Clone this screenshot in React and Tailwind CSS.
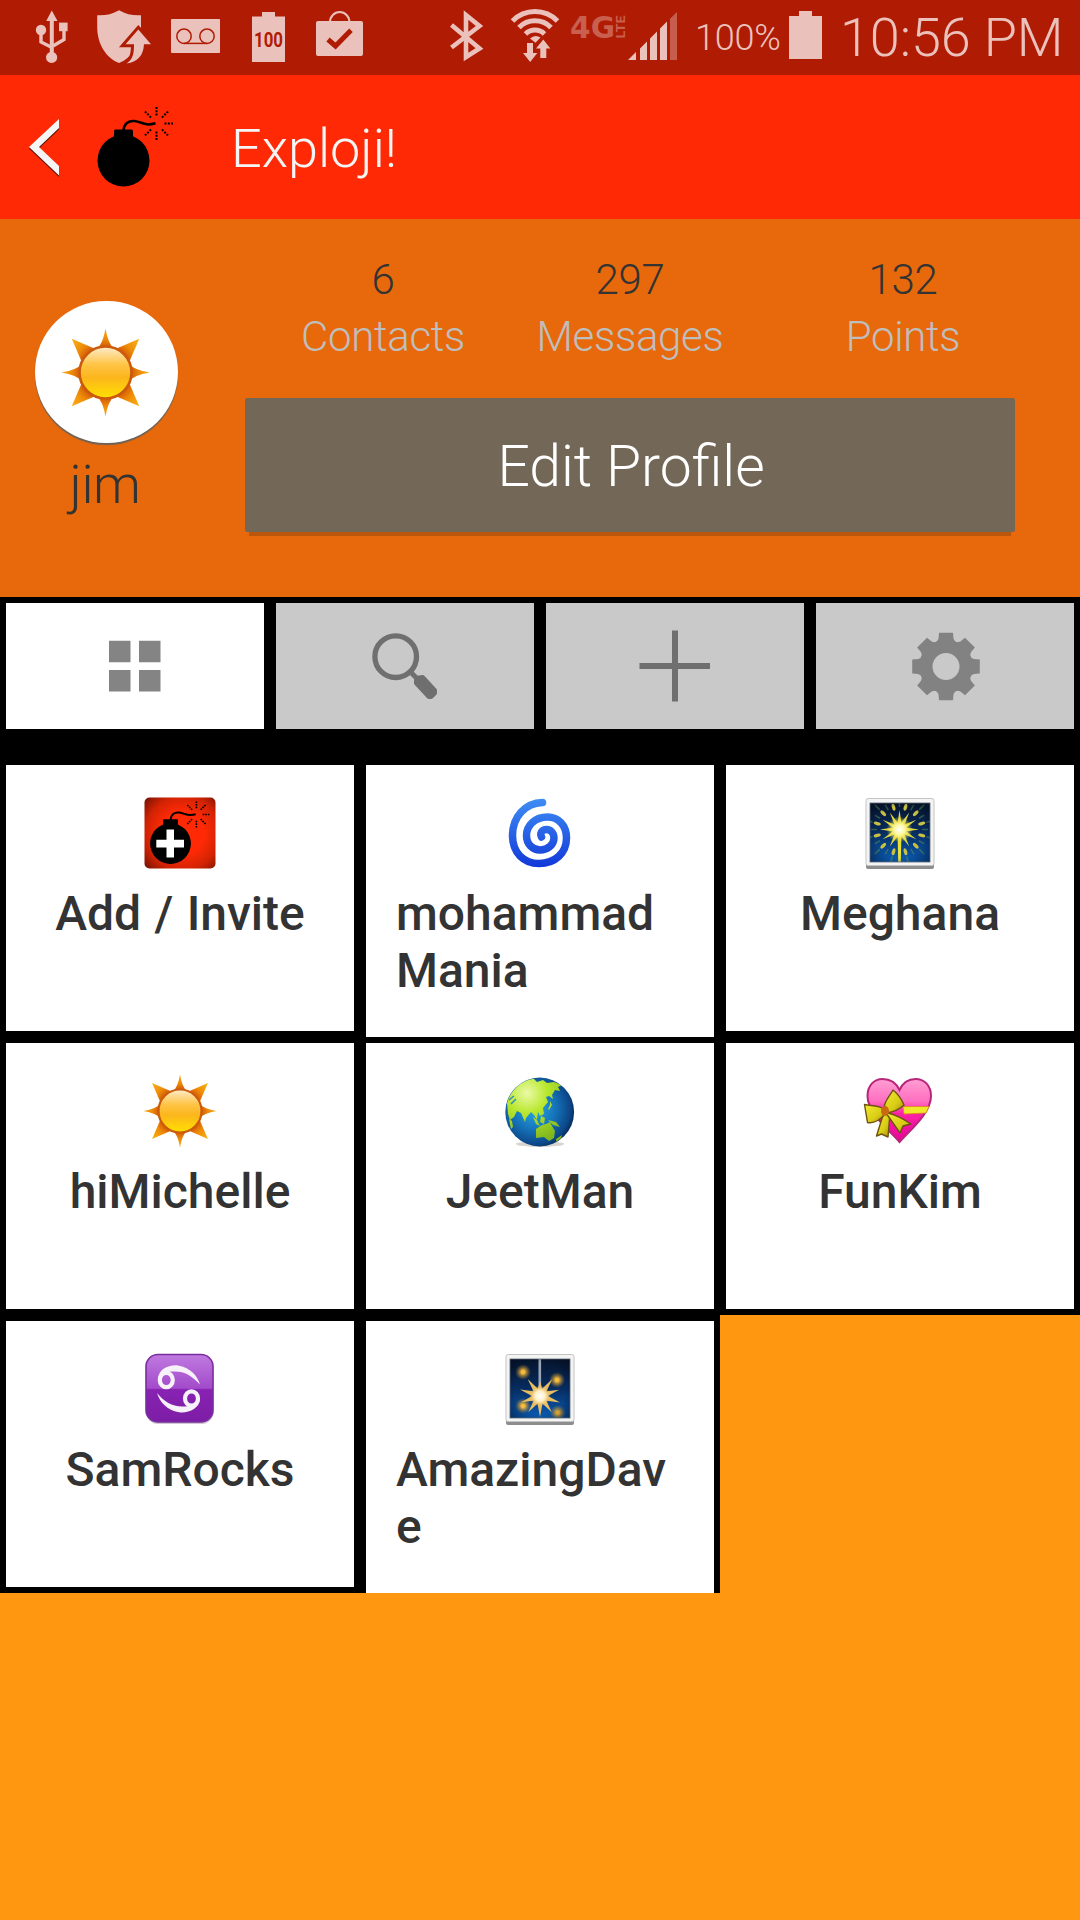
const STATUS = '#eac2bb'
const BAR = '#b01b04'

function StatusIcon({ box, width, className = '', children }) {
  return (
    <svg viewBox={box} width={width} height="75" fill={STATUS} className={`block shrink-0 overflow-visible ${className}`}>
      {children}
    </svg>
  )
}

function UsbIcon() {
  return (
    <StatusIcon box="35 0 34 75" width="34" className="ml-[35px]">
      <path d="M51.8 10.5 57.5 21H46.2z" />
      <rect x="49.8" y="20" width="4" height="34" />
      <circle cx="41" cy="30" r="5.2" />
      <rect x="59" y="22.6" width="8.6" height="8.6" />
      <circle cx="51.6" cy="57.4" r="5.6" />
      <path d="M41 33v9l10 5M64 31v8.500l-11 6.500" fill="none" stroke={STATUS} strokeWidth="3.400" />
    </StatusIcon>
  )
}

function ShieldIcon() {
  return (
    <StatusIcon box="96 0 56 75" width="56" className="ml-[27px]">
      <path d="M119 10.300C112 14.500 105 15.700 97.200 15.300V27c0 18 9.800 31.500 21.800 36 12-4.500 22-18 22-36V15.300C133 15.700 126 14.500 119 10.300z" />
      <path d="M138.300 29.500 151 44.300h-7c-.5 11-6.500 18.200-17.500 19.200 6-4 7.500-8.500 7.500-19.200h-8.500z" fill={BAR} stroke={BAR} strokeWidth="6" />
      <path d="M138.300 29.500 151 44.300h-7c-.5 11-6.500 18.200-17.500 19.200 6-4 7.500-8.500 7.500-19.200h-8.500z" />
    </StatusIcon>
  )
}

function VoicemailIcon() {
  return (
    <StatusIcon box="171 0 49 75" width="49" className="ml-[19px]">
      <rect x="171" y="19" width="49" height="34" rx="1" />
      <g fill="none" stroke={BAR} strokeWidth="1.500">
        <circle cx="184" cy="36.200" r="7.200" />
        <circle cx="207" cy="36.200" r="7.200" />
        <path d="M184 43.400h23" />
      </g>
    </StatusIcon>
  )
}

function BatteryFullIcon() {
  return (
    <StatusIcon box="252 0 33 75" width="33" className="ml-[32px]">
      <path d="M262 12h13v4.500h10V62h-33V16.500h10z" />
      <text x="254" y="46.500" textLength="29" lengthAdjust="spacingAndGlyphs" fontFamily="Roboto, sans-serif" fontWeight="700" fontSize="20.500" fill={BAR}>
        100
      </text>
    </StatusIcon>
  )
}

function BagIcon() {
  return (
    <StatusIcon box="316 0 47 75" width="47" className="ml-[31px]">
      <rect x="316" y="21" width="47" height="35" rx="2" />
      <path d="M330 22a9.700 10 0 0 1 19.400 0" fill="none" stroke={STATUS} strokeWidth="2" />
      <path d="m328 39.500 7.500 6.500L351 30.300" fill="none" stroke={BAR} strokeWidth="5" />
    </StatusIcon>
  )
}

function BluetoothIcon() {
  return (
    <StatusIcon box="449 0 35 75" width="35" className="ml-[86px]">
      <path d="m451.500 25 28 23.500-13.500 8.500V15l13.500 11-28 21.500" fill="none" stroke={STATUS} strokeWidth="4.600" />
    </StatusIcon>
  )
}

function WifiIcon() {
  return (
    <StatusIcon box="509 0 52 75" width="52" className="ml-[25px]">
      <g fill="none" stroke={STATUS} strokeWidth="5">
        <path d="M512.500 21a31.500 31.500 0 0 1 45 0" />
        <path d="M519 27.500a22.500 22.500 0 0 1 32 0" />
        <path d="M525.500 34a13.500 13.500 0 0 1 19 0" />
      </g>
      <path d="M530 38.500q5-4.500 10.500-1l-5 5.300z" />
      <path d="M527 43h6v10h4.300L530.200 62 523 53h4z" />
      <path d="M540.300 58h6V48.500h4L543.300 39.500 536 48.500h4.300z" />
    </StatusIcon>
  )
}

function LteIcon() {
  return (
    <StatusIcon box="570 0 56 75" width="56" className="ml-[9px]">
      <g fill="#c95f4f">
        <text x="570" y="38" textLength="45" lengthAdjust="spacingAndGlyphs" fontFamily="DejaVu Sans, sans-serif" fontWeight="700" fontSize="29.500">
          4G
        </text>
        <text transform="translate(625 38.500) rotate(-90)" textLength="23" lengthAdjust="spacingAndGlyphs" fontFamily="Roboto, sans-serif" fontWeight="700" fontSize="12.500">
          LTE
        </text>
      </g>
    </StatusIcon>
  )
}

function SignalIcon() {
  return (
    <StatusIcon box="628 0 50 75" width="50" className="ml-[2px]">
      <path d="M628 60h8v-8zM640 60h7V41.500l-7 7zM650 60h7V31.500l-7 7zM660 60h7V21.500l-7 7z" />
      <path d="M670 60h7V12l-7 6.700z" opacity=".4" />
    </StatusIcon>
  )
}

function StatusBar() {
  return (
    <div className="flex h-[75px] items-center bg-[#b01b04] text-[#eac2bb]">
      <UsbIcon />
      <ShieldIcon />
      <VoicemailIcon />
      <BatteryFullIcon />
      <BagIcon />
      <BluetoothIcon />
      <WifiIcon />
      <LteIcon />
      <SignalIcon />
      <span className="ml-[17px] w-[94px] pt-[2px] text-[36px] leading-[75px] font-[360] tracking-[-0.2px] whitespace-nowrap">100%</span>
      <StatusIcon box="789 0 33 75" width="33">
        <path d="M799 11h13v5h10v43h-33V16h10z" />
      </StatusIcon>
      <span className="ml-[18px] text-[54px] leading-[70px] font-[330] tracking-[-0.1px] whitespace-nowrap">10:56 PM</span>
    </div>
  )
}

// Origin is the centre of the bomb's body
function Bomb({ transform }) {
  return (
    <g transform={transform}>
      <circle r="26" />
      <rect x="-9.500" y="-31" width="19" height="12" rx="1.500" />
      <path d="M0-30C.5-37 5-40 11-39.500 19-38.500 21-34 32-37.300" fill="none" stroke="#000" strokeWidth="2.500" />
      <g fill="none" stroke="#000" strokeWidth="2" strokeDasharray="2 1.300">
        <path d="M33-45v-9.500M33-29v9.500M41-37h8.500M38.500-43l7-7M38.500-31l7 7M27.500-31l-7 7M27.500-43l-7-7" />
      </g>
    </g>
  )
}

const SUN_RAYS = [0, 45, 90, 135, 180, 225, 270, 315]

function Sun({ size = 72 }) {
  return (
    <svg viewBox="0 0 72 72" width={size} height={size} className="block overflow-visible">
      <defs>
        <linearGradient id="sunCore" x1="0" y1="0" x2="0" y2="1">
          <stop offset="0" stopColor="#fdeccb" />
          <stop offset=".35" stopColor="#ffc445" />
          <stop offset=".6" stopColor="#fcb61c" />
          <stop offset="1" stopColor="#ffe100" />
        </linearGradient>
        <radialGradient id="sunRay" gradientUnits="userSpaceOnUse" cx="36" cy="36" r="40">
          <stop offset=".5" stopColor="#cf5205" />
          <stop offset=".7" stopColor="#ee8c08" />
          <stop offset="1" stopColor="#fdb515" />
        </radialGradient>
      </defs>
      {SUN_RAYS.map((angle) => (
        <path
          key={angle}
          d={angle % 90 ? 'M36-3.500 44.500 18h-17z' : 'M36-.5Q38 12 43.500 17h-15Q34 12 36-.5z'}
          fill="url(#sunRay)"
          transform={`rotate(${angle} 36 36)`}
        />
      ))}
      <circle cx="36" cy="36" r="21.500" fill="url(#sunCore)" stroke="#cc5a0c" strokeWidth="2.200" />
    </svg>
  )
}

function AddInvite() {
  return (
    <svg viewBox="0 0 72 72" width="72" height="72" className="block">
      <defs>
        <radialGradient id="addBg" cx=".54" cy=".5" r=".74">
          <stop offset=".4" stopColor="#ff2a05" />
          <stop offset=".7" stopColor="#d32304" />
          <stop offset="1" stopColor="#6d1102" />
        </radialGradient>
      </defs>
      <rect x=".5" y=".5" width="71" height="71" rx="5" fill="url(#addBg)" />
      <Bomb transform="translate(26.500 46.500) scale(.785)" />
      <path d="M22.500 32.500H30v10.200h10v7.800H30v10h-7.500v-10H12.300v-7.800h10.200z" fill="#fff" />
    </svg>
  )
}

function Cyclone() {
  return (
    <svg viewBox="0 0 72 72" width="72" height="72" className="block">
      <defs>
        <linearGradient id="cyclone" gradientUnits="userSpaceOnUse" x1="0" y1="2" x2="0" y2="70">
          <stop offset="0" stopColor="#3f8df5" />
          <stop offset="1" stopColor="#1238d8" />
        </linearGradient>
      </defs>
      <path
        d="M38.500 5.500C21 6 8.500 20 8.500 38.500 8.500 56 20 66.500 35 66.500 51 66.500 62.500 56 62.500 41 62.500 28 54 20 43.500 20 31 20 22.500 28.500 22.500 38.500 22.500 47 28.500 53 36 53 44 53 50 47.500 50 41 50 35.500 46 32.500 42.500 32.500 38 32.500 35.500 36 37.500 40"
        fill="none"
        stroke="url(#cyclone)"
        strokeWidth="7.500"
        strokeLinecap="round"
      />
    </svg>
  )
}

function Frame({ id, children }) {
  return (
    <svg viewBox="0 0 72 72" width="72" height="72" className="block">
      <defs>
        <linearGradient id={id} x1="0" y1="0" x2="0" y2="1">
          <stop offset="0" stopColor="#06142c" />
          <stop offset=".5" stopColor="#062c60" />
          <stop offset="1" stopColor="#0a5db6" />
        </linearGradient>
        <radialGradient id={`${id}Edge`} r=".72">
          <stop offset=".6" stopColor="#020a1c" stopOpacity="0" />
          <stop offset="1" stopColor="#020a1c" stopOpacity=".6" />
        </radialGradient>
        <clipPath id={`${id}Clip`}>
          <rect x="6" y="6" width="60" height="59" />
        </clipPath>
      </defs>
      <rect x="2" y="4" width="68" height="68" rx="2" fill="#8d8d8d" />
      <rect x="2" y="1.500" width="68" height="67" rx="2" fill="#f4f4f4" stroke="#c4c4c4" />
      <rect x="6" y="6" width="60" height="59" fill={`url(#${id})`} />
      <g clipPath={`url(#${id}Clip)`}>{children}</g>
      <rect x="6" y="6" width="60" height="59" fill={`url(#${id}Edge)`} stroke="#5d6670" strokeWidth=".8" />
    </svg>
  )
}

const TWELFTHS = [0, 30, 60, 90, 120, 150, 180, 210, 240, 270, 300, 330]

function Fireworks() {
  return (
    <Frame id="fireworks">
      <radialGradient id="burst">
        <stop offset="0" stopColor="#fff" />
        <stop offset=".4" stopColor="#fdf8a0" />
        <stop offset="1" stopColor="#f3e33a" stopOpacity="0" />
      </radialGradient>
      {TWELFTHS.map((angle) => (
        <g key={angle} transform={`rotate(${angle} 35.500 32.500)`}>
          <path d="M35.500 13 38.200 31h-5.400z" fill="#dfd63e" />
          <ellipse cx="35.500" cy="9.500" rx="1.700" ry="3.600" fill="#c9c143" transform="rotate(15 35.500 32.500)" />
          <ellipse cx="35.500" cy="1" rx="1" ry="4" fill="#5f8f52" opacity=".55" transform="rotate(15 35.500 32.500)" />
          <path d="M35.500 4v6" stroke="#5f8f52" strokeWidth="1.500" opacity=".5" />
        </g>
      ))}
      <path d="M33.500 34h4l-.7 31h-2.600z" fill="#e9df35" />
      <circle cx="35.500" cy="32.500" r="13" fill="url(#burst)" />
    </Frame>
  )
}

function Globe() {
  return (
    <svg viewBox="0 0 72 72" width="72" height="72" className="block">
      <defs>
        <radialGradient id="ocean" cx=".42" cy=".45" r=".62">
          <stop offset="0" stopColor="#28a8e4" />
          <stop offset=".5" stopColor="#1673b9" />
          <stop offset=".85" stopColor="#0b4687" />
          <stop offset="1" stopColor="#042247" />
        </radialGradient>
        <radialGradient id="land" gradientUnits="userSpaceOnUse" cx="23" cy="18" r="50">
          <stop offset="0" stopColor="#eafaa8" />
          <stop offset=".4" stopColor="#b9e82f" />
          <stop offset="1" stopColor="#7fb51d" />
        </radialGradient>
        <clipPath id="globeClip">
          <circle cx="35.700" cy="37" r="34" />
        </clipPath>
      </defs>
      <ellipse cx="36" cy="69" rx="24" ry="3" fill="#d8d4cf" />
      <circle cx="35.700" cy="37" r="34.400" fill="url(#ocean)" />
      <g clipPath="url(#globeClip)" fill="url(#land)">
        <path d="M3 28C5 14 17 4 29 3l4 4 6-2 4 3 7-1 8 3-4 2 2 4-5-1-3 5 1 4-4-3-3 1 2 5-5 6 1 6-4 2-2-4-1 8-3-5-3-3-5 6-1 4-4-9-4-2-3 6-4 3-2-6z" />
        <path d="M5 44l3 2 1 6-2 2zM29 42l4 3 3 6-4-2zM37 41l4 2-1 6-4-2zM44 45l8 2 4 5-7-2zM46 26l2 4-3 5-1-1 2-4z" />
        <path d="M32 54l6-4 4-1 4-2 2 4 3 5-1 7-5 3-5-4-8 1zM52 64l6-4-1 4-5 3z" />
        <path d="M5 25l5-4M7 29l5-5" stroke="#2c8dbd" strokeWidth="1.500" />
      </g>
    </svg>
  )
}

function GiftHeart() {
  return (
    <svg viewBox="0 0 72 72" width="72" height="72" className="block overflow-visible">
      <defs>
        <linearGradient id="heart" x1="0" y1="0" x2="0" y2="1">
          <stop offset="0" stopColor="#ff9ed2" />
          <stop offset=".35" stopColor="#ff6fc0" />
          <stop offset=".55" stopColor="#fb23a6" />
          <stop offset="1" stopColor="#e8009a" />
        </linearGradient>
        <linearGradient id="bow" x1="0" y1="0" x2="1" y2="1">
          <stop offset="0" stopColor="#f2ee2f" />
          <stop offset=".6" stopColor="#d9cc16" />
          <stop offset="1" stopColor="#a98c06" />
        </linearGradient>
      </defs>
      <path d="M35.500 67C25 55 3.500 38 3.500 21 3.500 10 10.500 4 18.500 4c8 0 14 4.500 17 11C38.500 8.500 44 4 51.500 4 60 4 67 10 67 21c0 17-21 34-31.500 46z" fill="url(#heart)" stroke="#b8267c" strokeWidth="2" />
      <path d="M39 31.500h26l-3 6.500-22 1z" fill="#f0e92a" stroke="#d9861c" strokeWidth=".8" />
      <g fill="url(#bow)" stroke="#6e5210" strokeWidth="1.400" strokeLinejoin="round">
        <path d="M20 37 12.500 61l5-2 6.500 3 2-24z" />
        <path d="m22 38 14 20 3-7 8-2C41 45 33 40 24 38z" />
        <path d="M20 34C15 30 7 31 .5 29.500l3 18c7 1.500 14-4 18-9z" />
        <path d="M20 34c0-8 6-13 9-19 5 4 9 10 11 15-5 5-11 7-18 8z" />
      </g>
      <ellipse cx="21" cy="36" rx="4" ry="5" fill="#c96a12" />
    </svg>
  )
}

function Cancer() {
  return (
    <svg viewBox="0 0 72 72" width="72" height="72" className="block">
      <defs>
        <linearGradient id="cancerBg" x1="0" y1="0" x2="0" y2="1">
          <stop offset="0" stopColor="#c07ae0" />
          <stop offset=".5" stopColor="#a34bca" />
          <stop offset=".52" stopColor="#8822b2" />
          <stop offset="1" stopColor="#7d1da6" />
        </linearGradient>
      </defs>
      <rect x="2" y="2.500" width="67.500" height="68.500" rx="12" fill="#cfc8d3" />
      <rect x="2" y="1.500" width="67" height="67.500" rx="12" fill="url(#cancerBg)" stroke="#7a2d9e" strokeWidth="1.600" />
      <g fill="none" stroke="#f7f1fa" strokeWidth="4.200" strokeLinecap="round">
        <ellipse cx="22.300" cy="27" rx="6.500" ry="7.200" />
        <ellipse cx="47.500" cy="45.500" rx="6.500" ry="7.200" />
      </g>
      <g fill="#f7f1fa">
        <path d="M13.800 27C14 16 25 11.500 34 12.500 46 14.500 53 22 56 31.500 48 23 41 18.500 31 18.500 24 18.500 18 20 13.800 27z" />
        <path d="M56 45.500C55.500 56 44 60.500 35 59.300 23 57 16 49.500 13 40 20 48.500 28 53.500 38 53.500 45 53.500 51 52 56 45.500z" />
      </g>
    </svg>
  )
}

const EMBERS = [[19, 19], [53, 27], [19, 53], [54, 60]]
const STAR_RAYS = [[0, 15], [36, 21], [72, 20], [108, 21], [144, 20], [180, 21], [216, 20], [252, 20], [288, 21], [324, 21]]

function Sparkler() {
  return (
    <Frame id="sparkler">
      <radialGradient id="spark">
        <stop offset="0" stopColor="#fff" />
        <stop offset=".5" stopColor="#fdeec4" />
        <stop offset="1" stopColor="#efc05d" stopOpacity="0" />
      </radialGradient>
      <radialGradient id="ember">
        <stop offset=".2" stopColor="#f6bb3c" />
        <stop offset="1" stopColor="#a87b2a" stopOpacity="0" />
      </radialGradient>
      <rect x="34.500" y="5" width="2.600" height="32" fill="#9aa6b8" />
      {EMBERS.map(([x, y]) => (
        <circle key={`${x}-${y}`} cx={x} cy={y} r="8" fill="url(#ember)" />
      ))}
      {STAR_RAYS.map(([angle, length]) => (
        <path key={angle} d={`M36 ${43 - length}L39.500 41h-7z`} fill="#e9bd62" transform={`rotate(${angle} 36 43)`} />
      ))}
      <circle cx="36" cy="43" r="10.500" fill="url(#spark)" />
    </Frame>
  )
}

function GridIcon() {
  return (
    <svg viewBox="0 0 72 72" width="72" height="72" fill="#848484">
      <path d="M10 10.700h21.500v21.500H10zM40 10.700h21.500v21.500H40zM10 40h21.500v21.500H10zM40 40h21.500v21.500H40z" />
    </svg>
  )
}

function SearchIcon() {
  return (
    <svg viewBox="0 0 72 72" width="72" height="72" fill="none" stroke="#6f6f6f">
      <circle cx="26.700" cy="26.700" r="20.800" strokeWidth="5.300" />
      <path d="m41 41.500 9 9" strokeWidth="5" />
      <path d="M53.500 47.500 65.500 60.500V63L62 66.500H60L47.500 53V48.500z" fill="#6f6f6f" strokeWidth="5" strokeLinejoin="round" />
    </svg>
  )
}

function PlusIcon() {
  return (
    <svg viewBox="0 0 72 72" width="72" height="72" fill="#6f6f6f">
      <path d="M33 .5h6V33h32v6H39v32.500h-6V39H.5v-6H33z" />
    </svg>
  )
}

function GearIcon() {
  return (
    <svg viewBox="0 0 72 72" width="72" height="72" fill="#828282">
      <circle cx="37" cy="36.500" r="20" fill="none" stroke="#828282" strokeWidth="13" />
      {SUN_RAYS.map((angle) => (
        <path key={angle} d="M30 2.700h14l.5 6q1 3 4 4.300h-23q3-1.300 4-4.300z" transform={`rotate(${angle} 37 36.500)`} />
      ))}
    </svg>
  )
}

const stats = [
  { label: 'Contacts', value: '6', className: 'w-[276px]' },
  { label: 'Messages', value: '297', className: 'w-[218px]' },
  { label: 'Points', value: '132', className: 'w-[328px]' },
]

const tabs = [
  { id: 'contacts', Icon: GridIcon },
  { id: 'search', Icon: SearchIcon },
  { id: 'add', Icon: PlusIcon },
  { id: 'settings', Icon: GearIcon },
]

const contacts = [
  { name: 'Add / Invite', Icon: AddInvite },
  { name: 'mohammad Mania', Icon: Cyclone, tall: true },
  { name: 'Meghana', Icon: Fireworks },
  { name: 'hiMichelle', Icon: Sun },
  { name: 'JeetMan', Icon: Globe },
  { name: 'FunKim', Icon: GiftHeart },
  { name: 'SamRocks', Icon: Cancer },
  { name: 'AmazingDave', Icon: Sparkler, tall: true },
]

function Header() {
  return (
    <header className="flex h-[144px] items-center bg-[#ff2a05]">
      <svg viewBox="28 75 32 144" width="32" height="144" className="ml-7 block">
        <path d="M59 120.500 29 148.500 59 177v-9.500L39 148.500 59 129.500z" fill="#5c1206" />
        <path d="M59 119 29 147 59 175.500V166L39 147 59 128z" fill="#f5f5f5" />
      </svg>
      <svg viewBox="96 75 80 144" width="80" height="144" className="ml-9 block">
        <Bomb transform="translate(123.500 160.500)" />
      </svg>
      <h1 className="ml-[55px] pt-[4px] text-[54px] leading-[64px] font-[340] text-[#f5f5f5]">Exploji!</h1>
    </header>
  )
}

function Profile() {
  return (
    <section className="flex h-[378px] bg-[#e8690b]">
      <div className="flex w-[208px] shrink-0 flex-col items-start pt-[82px] pl-[35px]">
        <div className="grid h-[142px] w-[143px] place-items-center rounded-full bg-white pr-[3px] shadow-[0_2px_1px_#6b6257]">
          <Sun size={87} />
        </div>
        <p className="mt-[10px] w-[140px] text-center text-[54px] leading-[64px] font-[350] tracking-[-0.5px] text-[#333]">jim</p>
      </div>
      <div className="pt-9">
        <div className="ml-[37px] flex">
          {stats.map((stat) => (
            <div key={stat.label} className={`shrink-0 text-center text-[42px] leading-[50px] font-[340] tracking-[-0.3px] ${stat.className}`}>
              <p className="text-[#333]">{stat.value}</p>
              <p className="mt-[7px] text-[#bebebe]">{stat.label}</p>
            </div>
          ))}
        </div>
        <button className="mt-[36px] ml-[37px] block h-[134px] w-[770px] rounded-[2px] bg-[#736757] pt-[3px] pl-[2px] text-[57px] leading-[131px] font-[340] text-white shadow-[0_8px_0_-4px_#bb560d]">
          Edit Profile
        </button>
      </div>
    </section>
  )
}

function ContactTile({ name, Icon, tall }) {
  return (
    <div className={`h-[278px] bg-black px-1.5 pt-1.5 ${tall ? '' : 'pb-1.5'}`}>
      <div className="flex h-full flex-col items-center bg-white px-[30px] pt-8">
        <Icon />
        <p className="mt-4 text-[48px] leading-[57px] font-medium break-all text-[#333] [word-spacing:1.5px]">{name}</p>
      </div>
    </div>
  )
}

function App() {
  return (
    <div className="min-h-[1920px] w-[1080px] bg-[#ff9711] font-['Roboto',sans-serif]">
      <StatusBar />
      <Header />
      <Profile />
      <nav className="grid h-[162px] grid-cols-4 bg-black pb-6">
        {tabs.map(({ id, Icon }, index) => (
          <button key={id} className={`grid place-items-center border-6 border-black ${index === 0 ? 'bg-white' : 'bg-[#c9c9c9]'}`}>
            <Icon />
          </button>
        ))}
      </nav>
      <main className="grid grid-cols-3">
        {contacts.map((contact) => (
          <ContactTile key={contact.name} {...contact} />
        ))}
      </main>
    </div>
  )
}

export default App
